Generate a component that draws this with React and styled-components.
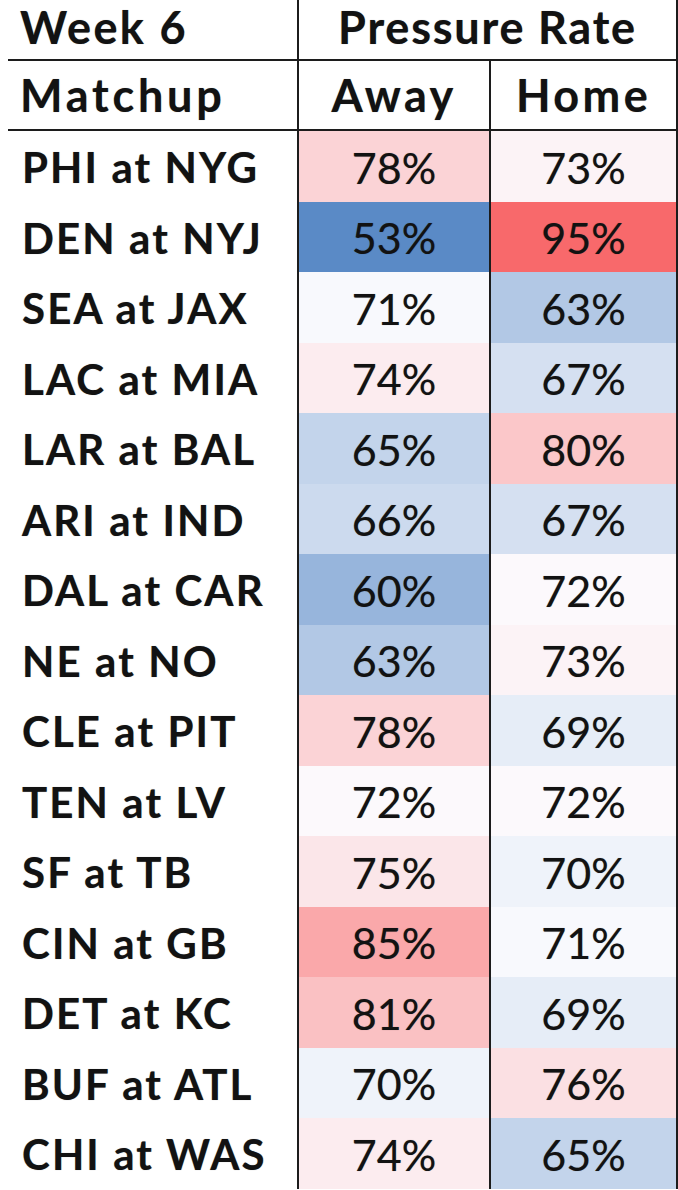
import styled, { createGlobalStyle } from "styled-components";

const GlobalStyle = createGlobalStyle`
  html, body {
    margin: 0;
    padding: 0;
    background: #ffffff;
  }
  body {
    font-family: Lato, "Liberation Sans", sans-serif;
    color: #121212;
  }
`;

const Page = styled.div`
  width: 678px;
  height: 1190px;
  overflow: hidden;
  padding-left: 8px;
  box-sizing: border-box;
`;

const Table = styled.div`
  display: grid;
  grid-template-columns: 289px 192px 189px;
  grid-template-rows: 61px 70px repeat(15, 70.5px);
`;

const line = "2px solid #1c1c1c";

const Cell = styled.div`
  display: flex;
  align-items: center;
  box-sizing: border-box;
  white-space: nowrap;
  line-height: 1;
  text-shadow: 0 0 0.8px rgba(0, 0, 0, 0.45);
`;

const HeadText = styled(Cell)`
  font-weight: 700;
  font-size: 45px;
  letter-spacing: 2.4px;
  border-bottom: ${line};
`;

const CornerHead = styled(HeadText)`
  padding-left: 12px;
  padding-bottom: ${(p) => (p.$top ? "4px" : "0")};
  letter-spacing: ${(p) => (p.$top ? "2.4px" : "3.8px")};
`;

const GroupHead = styled(HeadText)`
  grid-column: span 2;
  justify-content: center;
  padding-bottom: 4px;
  border-left: ${line};
  border-right: ${line};
  letter-spacing: 1.8px;
`;

const SubHead = styled(HeadText)`
  justify-content: center;
  border-left: ${line};
  border-right: ${(p) => (p.$last ? line : "none")};
  letter-spacing: 3.4px;
`;

const Matchup = styled(Cell)`
  padding-left: 14px;
  padding-top: 2px;
  font-weight: 700;
  font-size: 42px;
  letter-spacing: 2.1px;
`;

const Rate = styled(Cell)`
  justify-content: center;
  padding-top: 2px;
  border-left: ${line};
  border-right: ${(p) => (p.$last ? line : "none")};
  background: ${(p) => p.$bg};
  font-size: 43px;
`;

const games = [
  ["PHI at NYG", 78, 73],
  ["DEN at NYJ", 53, 95],
  ["SEA at JAX", 71, 63],
  ["LAC at MIA", 74, 67],
  ["LAR at BAL", 65, 80],
  ["ARI at IND", 66, 67],
  ["DAL at CAR", 60, 72],
  ["NE at NO", 63, 73],
  ["CLE at PIT", 78, 69],
  ["TEN at LV", 72, 72],
  ["SF at TB", 75, 70],
  ["CIN at GB", 85, 71],
  ["DET at KC", 81, 69],
  ["BUF at ATL", 70, 76],
  ["CHI at WAS", 74, 65],
];

// three-colour scale like Excel: blue (low) -> white (median) -> red (high)
const LOW = [90, 138, 198];
const MID = [252, 252, 255];
const HIGH = [248, 105, 107];

const all = games.flatMap(([, a, h]) => [a, h]).sort((x, y) => x - y);
const min = all[0];
const max = all[all.length - 1];
const median = (all[all.length / 2 - 1] + all[all.length / 2]) / 2;

const mix = (from, to, t) =>
  `rgb(${from.map((c, i) => Math.round(c + (to[i] - c) * t)).join(",")})`;

const heat = (v) =>
  v <= median
    ? mix(LOW, MID, (v - min) / (median - min))
    : mix(MID, HIGH, (v - median) / (max - median));

export default function App() {
  return (
    <Page>
      <GlobalStyle />
      <Table>
        <CornerHead $top>Week 6</CornerHead>
        <GroupHead>Pressure Rate</GroupHead>

        <CornerHead>Matchup</CornerHead>
        <SubHead>Away</SubHead>
        <SubHead $last>Home</SubHead>

        {games.map(([name, away, home]) => [
          <Matchup key={name + "-m"}>{name}</Matchup>,
          <Rate key={name + "-a"} $bg={heat(away)}>
            {away}%
          </Rate>,
          <Rate key={name + "-h"} $bg={heat(home)} $last>
            {home}%
          </Rate>,
        ])}
      </Table>
    </Page>
  );
}
